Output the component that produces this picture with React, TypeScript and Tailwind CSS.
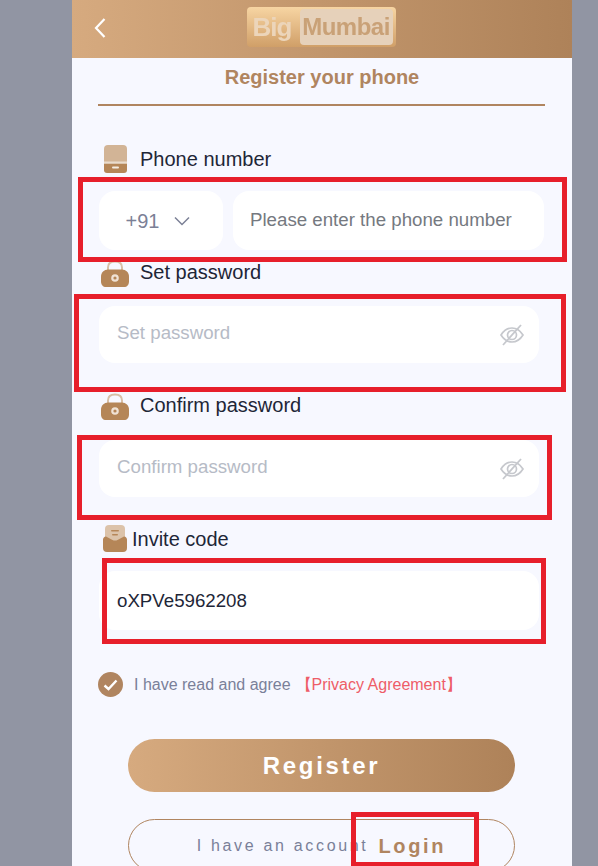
const Lock = () => (
  <svg width="28" height="28" viewBox="0 0 28 28" className="shrink-0">
    <path d="M7 11V7.500C7 3.500 10 1.500 14 1.500s7 2 7 6V11" fill="none" stroke="#d8bfa6" strokeWidth="2" />
    <path d="M7 9.500h14c3.800 0 7 3 7 7v5c0 3.500-2 5.500-5 5.500H5c-3 0-5-2-5-5.500v-5c0-4 3.200-7 7-7z" fill="#b58658" />
    <circle cx="14" cy="18" r="3.800" fill="#f0e3d6" />
    <circle cx="14" cy="18" r="1.600" fill="#b58658" />
  </svg>
);

const PhoneIcon = () => (
  <svg width="23" height="28" viewBox="0 0 23 28" className="shrink-0">
    <path d="M4 0h15a4 4 0 0 1 4 4v14.500H0V4a4 4 0 0 1 4-4z" fill="#d2b496" />
    <path d="M0 18.500h23V25a3 3 0 0 1-3 3H3a3 3 0 0 1-3-3z" fill="#b58658" />
    <rect x="0" y="16.500" width="23" height="2" fill="#eadccd" />
    <rect x="8" y="21.500" width="7" height="2" rx="1" fill="#f5ede4" />
  </svg>
);

const InviteIcon = () => (
  <svg width="24" height="27" viewBox="0 0 24 27" className="shrink-0">
    <path d="M6 0h12a4 4 0 0 1 4 4v14H2V4a4 4 0 0 1 4-4z" fill="#dcc3aa" />
    <rect x="8" y="5" width="8" height="1.600" rx=".8" fill="#b58658" />
    <rect x="9" y="9" width="6" height="1.600" rx=".8" fill="#b58658" />
    <path d="M3 11.500l6.500 3.500c1.500.8 3.500.8 5 0l6.500-3.500c1.800 0 3 1.500 3 3V23a4 4 0 0 1-4 4H4a4 4 0 0 1-4-4v-8.500c0-1.500 1.200-3 3-3z" fill="#b58658" />
  </svg>
);

const EyeOff = () => (
  <svg width="24" height="22" viewBox="0 0 24 22" fill="none" stroke="#c6c8cd" strokeWidth="1.700" className="shrink-0">
    <path d="M1 11c3-4.800 6.800-7 11-7s8 2.200 11 7c-3 4.800-6.800 7-11 7S4 15.800 1 11z" />
    <circle cx="12" cy="11" r="4.500" />
    <path d="M3 21L21 1" strokeWidth="1.800" />
  </svg>
);

const RedBox = ({ className }: { className: string }) => (
  <div className={`absolute border-[5px] border-[#e71f2b] pointer-events-none ${className}`} />
);

export default function App() {
  return (
    <div className="relative h-[866px] w-[598px] overflow-hidden bg-[#9195a3] font-['Liberation_Sans',Arial,sans-serif]">
      <div className="ml-[72px] h-full w-[500px] bg-[#f7f8ff]">
        <header className="relative flex h-[58px] items-center justify-center bg-gradient-to-r from-[#d6aa7f] to-[#ae8259]">
          <svg width="14" height="22" viewBox="0 0 14 22" fill="none" stroke="#fff" strokeWidth="2.200" className="absolute left-[21px] top-[17px]">
            <path d="M11.500 2L3 11l8.500 9" />
          </svg>
          <div className="mr-[2px] flex h-[40px] w-[149px] -translate-y-[2px] items-center rounded-[4px] bg-gradient-to-b from-[#f7d5a3] to-[#d09f68] pl-[6px] pr-[3px]">
            <span className="w-[47px] text-[26px] font-bold leading-none tracking-[-1px] text-[#ecd5ba] blur-[0.4px]">Big</span>
            <span className="flex h-[36px] w-[93px] items-center justify-center rounded-[4px] bg-[#e6d1ba] text-[24px] font-bold tracking-[-0.5px] text-[#c9a177] blur-[0.4px]">Mumbai</span>
          </div>
        </header>

        <h1 className="mt-[7px] text-center text-[20px] font-bold leading-[25px] text-[#b08560]">Register your phone</h1>
        <div className="mx-[26px] mt-[14px] h-[2px] w-[447px] bg-[#b08560]" />

        <div className="mt-[39px] flex h-[28px] items-center pl-[32px]">
          <PhoneIcon />
          <span className="ml-[13px] text-[20px] text-[#1e2637]">Phone number</span>
        </div>
        <div className="ml-[27px] mt-[18px] flex gap-[10px]">
          <div className="flex h-[59px] w-[124px] items-center justify-center gap-[14px] rounded-[16px] bg-white pr-[5px] text-[20px] text-[#7b8096]">
            <span>+91</span>
            <svg width="18" height="10" viewBox="0 0 18 10" fill="none" stroke="#7b8096" strokeWidth="1.500">
              <path d="M2 1.500l7 7 7-7" />
            </svg>
          </div>
          <div className="flex h-[59px] w-[311px] items-center rounded-[16px] bg-white pl-[17px] text-[18.7px] text-[#757980]">Please enter the phone number</div>
        </div>

        <div className="mt-[10px] flex h-[27px] items-center pl-[29px]">
          <Lock />
          <span className="ml-[11px] -translate-y-[2px] text-[20px] text-[#1e2637]">Set password</span>
        </div>
        <div className="ml-[27px] mt-[19px] flex h-[57px] w-[440px] items-center justify-between rounded-[16px] bg-white pl-[18px] pr-[15px] text-[18.7px] text-[#b6bbc6]">
          <span className="pb-[2px]">Set password</span>
          <EyeOff />
        </div>

        <div className="mt-[30px] flex h-[27px] items-center pl-[29px]">
          <Lock />
          <span className="ml-[11px] -translate-y-[2px] text-[20px] text-[#1e2637]">Confirm password</span>
        </div>
        <div className="ml-[27px] mt-[20px] flex h-[57px] w-[440px] items-center justify-between rounded-[16px] bg-white pl-[18px] pr-[15px] text-[18.7px] text-[#b6bbc6]">
          <span className="pb-[2px]">Confirm password</span>
          <EyeOff />
        </div>

        <div className="mt-[28px] flex h-[27px] items-center pl-[31px]">
          <InviteIcon />
          <span className="ml-[5px] text-[20px] text-[#1e2637]">Invite code</span>
        </div>
        <div className="ml-[27px] mt-[19px] flex h-[59px] w-[440px] items-center rounded-[16px] bg-white pl-[18px] pt-[2px] text-[18.7px] text-[#1e2637]">oXPVe5962208</div>

        <div className="ml-[26px] mt-[42px] flex h-[25px] items-center">
          <span className="flex h-[25px] w-[25px] items-center justify-center rounded-full bg-[#b08560]">
            <svg width="15" height="12" viewBox="0 0 15 12" fill="none" stroke="#fff" strokeWidth="2.400">
              <path d="M1.500 6.500l4 3.500 8-8.500" />
            </svg>
          </span>
          <span className="ml-[11px] text-[16px] text-[#7a8099]">I have read and agree</span>
          <span className="ml-[5px] text-[16px] text-[#ee5d68]">【Privacy Agreement】</span>
        </div>

        <div className="ml-[56px] mt-[42px] flex h-[53px] w-[387px] items-center justify-center rounded-full bg-gradient-to-r from-[#d6aa7f] to-[#ae8259] text-[24px] font-bold tracking-[2.67px] text-white">Register</div>

        <div className="ml-[56px] mt-[27px] flex h-[53px] w-[387px] items-center justify-center rounded-full border border-[#b08560]">
          <span className="text-[16px] tracking-[2.67px] text-[#7a8099]">I have an account</span>
          <span className="ml-[10px] text-[20px] font-bold tracking-[2.67px] text-[#b08560]">Login</span>
        </div>
      </div>

      <RedBox className="left-[78px] top-[177px] h-[85px] w-[489px]" />
      <RedBox className="left-[74px] top-[294px] h-[98px] w-[492px]" />
      <RedBox className="left-[77px] top-[435px] h-[85px] w-[475px]" />
      <RedBox className="left-[102px] top-[558px] h-[86px] w-[444px]" />
      <RedBox className="left-[351px] top-[812px] h-[55px] w-[128px]" />
    </div>
  );
}
